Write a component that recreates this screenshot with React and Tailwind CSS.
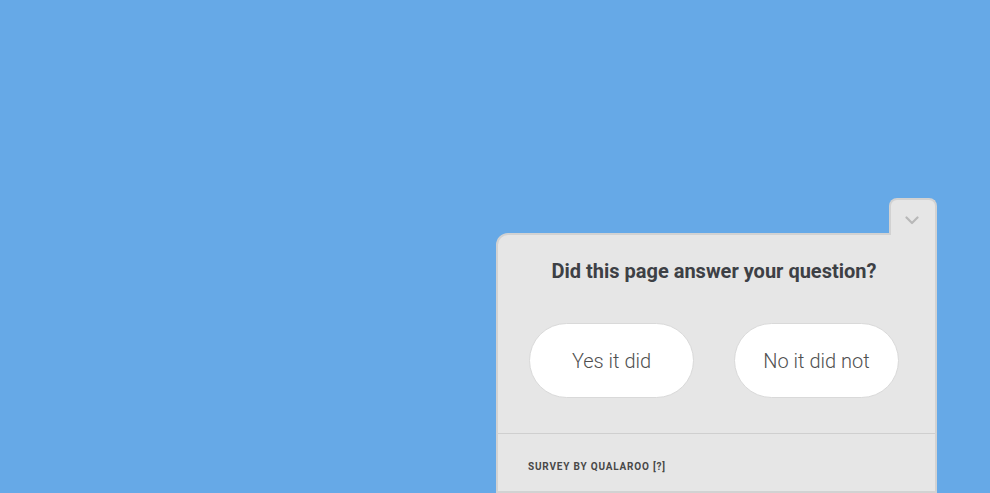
import React from 'react';

const Chevron = () => (
  <svg width="14" height="9" viewBox="0 0 14 9" fill="none">
    <path d="M1.5 1.5 L7 7 L12.5 1.5" stroke="#b8b8b8" strokeWidth="2.2" strokeLinecap="round" strokeLinejoin="round" />
  </svg>
);

const App = () => {
  return (
    <div className="w-[990px] h-[493px] overflow-hidden bg-[#66a9e7] flex flex-col items-end pt-[198px] pr-[53px] font-['Roboto',sans-serif]">
      <div className="relative z-10 -mb-[2px] w-[48px] h-[40px] bg-[#e6e6e6] border-2 border-b-0 border-[#d2d2d2] rounded-t-[8px] flex justify-center pt-[16px] pr-[3px]">
        <Chevron />
      </div>
      <div className="w-[441px] h-[300px] bg-[#e6e6e6] border-2 border-[#d2d2d2] rounded-tl-[12px]">
        <p className="pt-[24px] text-center text-[20px] leading-[25px] font-bold text-[#3d4045] pr-[5px]">
          Did this page answer your question?
        </p>
        <div className="flex gap-[40px] pl-[31px] pt-[39px] pb-[35px]">
          <button className="w-[165px] h-[75px] rounded-full bg-white border border-[#d9d9d9] text-[20px] font-light text-[#505050]">
            Yes it did
          </button>
          <button className="w-[165px] h-[75px] rounded-full bg-white border border-[#d9d9d9] text-[20px] font-light text-[#505050]">
            No it did not
          </button>
        </div>
        <div className="border-t border-[#cfcfcf] pl-[30px] pt-[26px]">
          <p className="text-[10px] leading-[13px] font-bold tracking-[0.8px] text-[#484848]">SURVEY BY QUALAROO [?]</p>
        </div>
      </div>
    </div>
  );
};

export default App;
